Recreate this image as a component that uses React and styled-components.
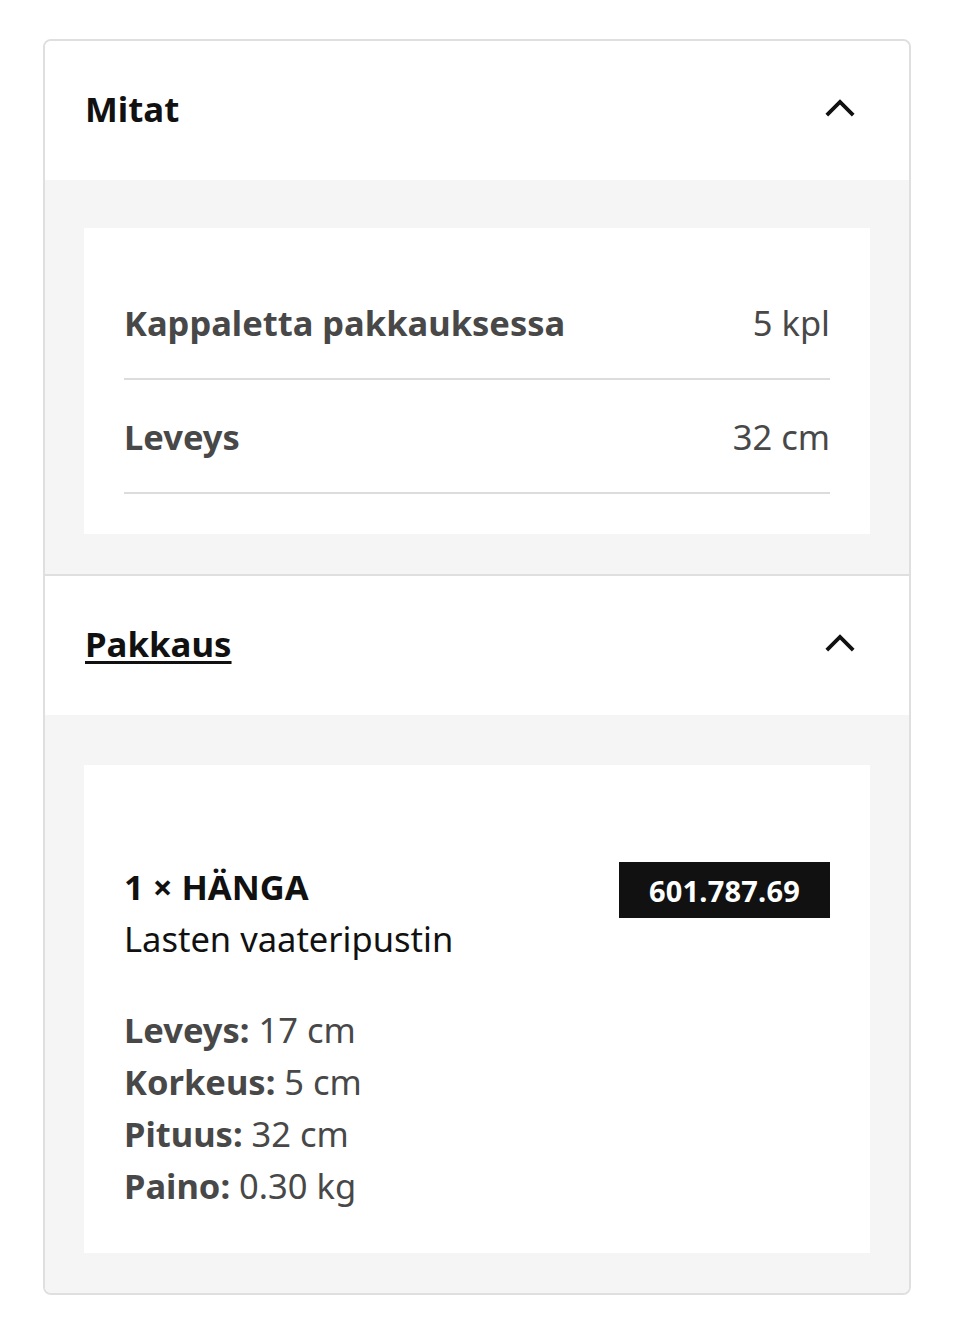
import React from 'react';
import styled, { createGlobalStyle } from 'styled-components';

const Global = createGlobalStyle`
    body {
        margin: 0;
        background: #fff;
        font-family: "Noto Sans", "Open Sans", sans-serif;
    }
`;

const Page = styled.div`
    padding: 39px 49px 24px 43px;
`;

const Card = styled.section`
    border: 2px solid #dfdfdf;
    border-radius: 8px;
    overflow: hidden;
`;

const Section = styled.div`
    & + & {
        border-top: 2px solid #dfdfdf;
    }
`;

const Header = styled.div`
    height: 139px;
    display: flex;
    align-items: center;
    justify-content: space-between;
    padding: 0 54px 0 40px;
    background: #fff;

    svg {
        margin-top: -4px;
    }
`;

const Title = styled.h2`
    margin: -4px 0 0;
    font-size: 34.8px;
    font-weight: 700;
    color: #111;
    text-decoration: ${p => (p.$underline ? 'underline' : 'none')};
    text-decoration-thickness: 2.5px;
    text-underline-offset: 4px;
`;

const Body = styled.div`
    background: #f5f5f5;
    padding: ${p => p.$top}px 39px 40px;
`;

const Panel = styled.div`
    background: #fff;
    padding: ${p => p.$pad};
`;

const Row = styled.div`
    height: 112px;
    display: flex;
    align-items: center;
    justify-content: space-between;
    border-bottom: 2px solid #dcdcdc;
    font-size: 34.5px;
    color: #484848;
`;

const Label = styled.span`
    font-weight: 700;
`;

const Value = styled.span`
    font-weight: 400;
`;

const ItemHead = styled.div`
    display: flex;
    justify-content: space-between;
    align-items: flex-start;
`;

const ItemName = styled.div`
    font-size: 34.5px;
    font-weight: 700;
    color: #111;
    line-height: 52px;
`;

const ItemDesc = styled.div`
    font-size: 34.5px;
    color: #111;
    line-height: 52px;
`;

const Tag = styled.div`
    background: #111;
    color: #fff;
    font-weight: 700;
    font-size: 29px;
    height: 56px;
    padding: 0 30px;
    display: flex;
    align-items: center;
    margin-top: 1px;
    letter-spacing: 0.2px;
`;

const Specs = styled.div`
    margin-top: 39px;
    font-size: 34.5px;
    line-height: 52px;
    color: #484848;
`;

const Chevron = () => (
    <svg width="30" height="20" viewBox="0 0 30 20" fill="none">
        <path d="M1.8 16.2 L15 3 L28.2 16.2" stroke="#111" strokeWidth="3.8" />
    </svg>
);

const specs = [
    ['Leveys', '17 cm'],
    ['Korkeus', '5 cm'],
    ['Pituus', '32 cm'],
    ['Paino', '0.30 kg'],
];

export default function App() {
    return (
        <>
            <Global />
            <Page>
                <Card>
                    <Section>
                        <Header>
                            <Title>Mitat</Title>
                            <Chevron />
                        </Header>
                        <Body $top={48}>
                            <Panel $pad="38px 40px 40px">
                                <Row>
                                    <Label>Kappaletta pakkauksessa</Label>
                                    <Value>5 kpl</Value>
                                </Row>
                                <Row>
                                    <Label>Leveys</Label>
                                    <Value>32 cm</Value>
                                </Row>
                            </Panel>
                        </Body>
                    </Section>
                    <Section>
                        <Header>
                            <Title $underline>Pakkaus</Title>
                            <Chevron />
                        </Header>
                        <Body $top={50}>
                            <Panel $pad="96px 40px 41px">
                                <ItemHead>
                                    <div>
                                        <ItemName>1 × HÄNGA</ItemName>
                                        <ItemDesc>Lasten vaateripustin</ItemDesc>
                                    </div>
                                    <Tag>601.787.69</Tag>
                                </ItemHead>
                                <Specs>
                                    {specs.map(([k, v]) => (
                                        <div key={k}>
                                            <Label>{k}:</Label> {v}
                                        </div>
                                    ))}
                                </Specs>
                            </Panel>
                        </Body>
                    </Section>
                </Card>
            </Page>
        </>
    );
}
